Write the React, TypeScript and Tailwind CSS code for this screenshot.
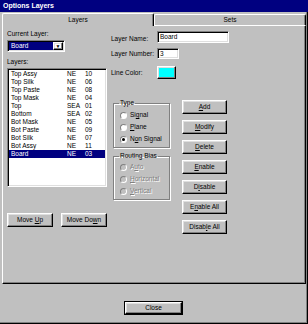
import React from "react";

const raised =
  "border border-t-white border-l-white border-r-black border-b-black shadow-[inset_-1px_-1px_#808080,inset_1px_1px_#dfdfdf]";
const sunken =
  "border border-t-[#808080] border-l-[#808080] border-r-white border-b-white shadow-[inset_1px_1px_#000,inset_-1px_-1px_#dfdfdf]";

const layers = [
  ["Top Assy", "NE", "10"],
  ["Top Silk", "NE", "06"],
  ["Top Paste", "NE", "08"],
  ["Top Mask", "NE", "04"],
  ["Top", "SEA", "01"],
  ["Bottom", "SEA", "02"],
  ["Bot Mask", "NE", "05"],
  ["Bot Paste", "NE", "09"],
  ["Bot Silk", "NE", "07"],
  ["Bot Assy", "NE", "11"],
  ["Board", "NE", "03"],
];

function Btn({ label, hot, className = "" }: { label: string; hot: number; className?: string }) {
  return (
    <div className={`${raised} h-[14px] flex items-center justify-center bg-[#c0c0c0] ${className}`}>
      <span>
        {label.slice(0, hot)}
        <span className="underline">{label[hot]}</span>
        {label.slice(hot + 1)}
      </span>
    </div>
  );
}

function Radio({ label, hot, checked, disabled }: { label: string; hot: number; checked?: boolean; disabled?: boolean }) {
  return (
    <div className="h-[12px] flex items-center gap-[3px] pl-[6px]">
      <div
        className={`w-[7px] h-[7px] rounded-full border border-t-[#808080] border-l-[#808080] border-r-white border-b-white flex items-center justify-center ${
          disabled ? "bg-[#c0c0c0]" : "bg-white"
        }`}
      >
        {checked && <div className="w-[3px] h-[3px] rounded-full bg-black" />}
      </div>
      <span className={disabled ? "text-[#808080] [text-shadow:1px_1px_#fff]" : ""}>
        {label.slice(0, hot)}
        <span className="underline">{label[hot]}</span>
        {label.slice(hot + 1)}
      </span>
    </div>
  );
}

export default function App() {
  return (
    <div
      className="w-[308px] h-[324px] bg-[#c0c0c0] flex flex-col text-[6.5px] leading-[8px] text-black overflow-hidden"
      style={{ fontFamily: '"Liberation Sans", Arial, sans-serif' }}
    >
      {/* title bar */}
      <div className="h-[12px] bg-[#000080] text-white font-bold text-[7px] flex items-center px-[3px]">
        Options Layers
      </div>

      <div className="flex-1 flex flex-col border-r border-b border-r-black border-b-black shadow-[inset_-1px_-1px_#808080] pl-[2px] pr-[1px]">
        {/* tabs */}
        <div className="flex mt-[1px] h-[12px] items-end">
          <div className="relative z-10 -mb-px w-[152px] h-[13px] bg-[#c0c0c0] border-t border-l border-r border-t-white border-l-white border-r-black rounded-t-[2px] shadow-[inset_-1px_0_#808080] flex items-center justify-center">
            Layers
          </div>
          <div className="flex-1 h-[11px] border-t border-l border-r border-t-white border-l-white border-r-black rounded-t-[2px] shadow-[inset_-1px_0_#808080] flex items-center justify-center">
            Sets
          </div>
        </div>

        {/* panel */}
        <div className="h-[259px] border border-t-white border-l-white border-r-black border-b-black shadow-[inset_-1px_-1px_#808080] flex">
          {/* left column */}
          <div className="ml-[4px] w-[100px] flex flex-col">
            <div className="mt-[4px] h-[8px]">Current Layer:</div>
            <div className={`${sunken} mt-[2px] w-[58px] h-[12px] bg-white flex p-[1px]`}>
              <div className="flex-1 bg-[#000080] text-white flex items-center pl-[2px]">Board</div>
              <div className={`${raised} w-[10px] flex items-center justify-center text-[5px]`}>▼</div>
            </div>
            <div className="mt-[6px] h-[8px]">Layers:</div>
            <div className={`${sunken} mt-[2px] h-[119px] bg-white pt-[1px] px-[1px]`}>
              {layers.map(([name, type, num]) => {
                const sel = name === "Board";
                return (
                  <div
                    key={name}
                    className={`h-[8px] flex items-center pl-[2px] ${sel ? "bg-[#000080] text-white" : ""}`}
                  >
                    <span className="w-[56px]">{name}</span>
                    <span className="w-[18px]">{type}</span>
                    <span>{num}</span>
                  </div>
                );
              })}
            </div>
            <div className="mt-[26px] flex gap-[8px]">
              <Btn label="Move Up" hot={5} className="w-[46px]" />
              <Btn label="Move Down" hot={7} className="w-[46px]" />
            </div>
          </div>

          {/* right area */}
          <div className="ml-[4px] flex-1 flex flex-col">
            <div className="mt-[5px] h-[12px] flex items-center">
              <span className="w-[46px] mt-[3px]">Layer Name:</span>
              <div className={`${sunken} w-[72px] h-[12px] bg-white flex items-center pl-[2px]`}>Board</div>
            </div>
            <div className="mt-[5px] h-[11px] flex items-center">
              <span className="w-[46px]">Layer Number:</span>
              <div className={`${sunken} w-[22px] h-[11px] bg-white flex items-center pl-[2px]`}>3</div>
            </div>
            <div className="mt-[7px] h-[13px] flex items-center">
              <span className="w-[46px]">Line Color:</span>
              <div className={`${raised} w-[19px] h-[13px] p-[1px]`}>
                <div className="w-full h-full bg-[#00ffff]" />
              </div>
            </div>

            <div className="mt-[20px] flex">
              <div className="ml-[2px] w-[57px] flex flex-col">
                <fieldset className="border border-[#808080] shadow-[inset_1px_1px_#fff,1px_1px_#fff] pb-[2px]">
                  <legend className="ml-[5px] px-[1px] h-[8px]">Type</legend>
                  <div className="pt-[2px]">
                    <Radio label="Signal" hot={2} />
                    <Radio label="Plane" hot={0} />
                    <Radio label="Non Signal" hot={1} checked />
                  </div>
                </fieldset>
                <fieldset className="mt-[4px] border border-[#808080] shadow-[inset_1px_1px_#fff,1px_1px_#fff] pb-[2px]">
                  <legend className="ml-[5px] px-[1px] h-[8px]">Routing Bias</legend>
                  <div className="pt-[1px]">
                    <Radio label="Auto" hot={1} disabled />
                    <Radio label="Horizontal" hot={0} disabled />
                    <Radio label="Vertical" hot={0} disabled />
                  </div>
                </fieldset>
              </div>

              <div className="ml-[12px] mt-[1px] w-[45px] flex flex-col gap-[6px]">
                <Btn label="Add" hot={0} />
                <Btn label="Modify" hot={0} />
                <Btn label="Delete" hot={0} />
                <Btn label="Enable" hot={0} />
                <Btn label="Disable" hot={1} />
                <Btn label="Enable All" hot={1} />
                <Btn label="Disable All" hot={5} />
              </div>
            </div>
          </div>
        </div>

        {/* bottom */}
        <div className="mt-[17px] flex justify-center pr-[1px]">
          <div className="border border-black">
            <div className={`${raised} w-[57px] h-[12px] flex items-center justify-center`}>Close</div>
          </div>
        </div>
      </div>
    </div>
  );
}
